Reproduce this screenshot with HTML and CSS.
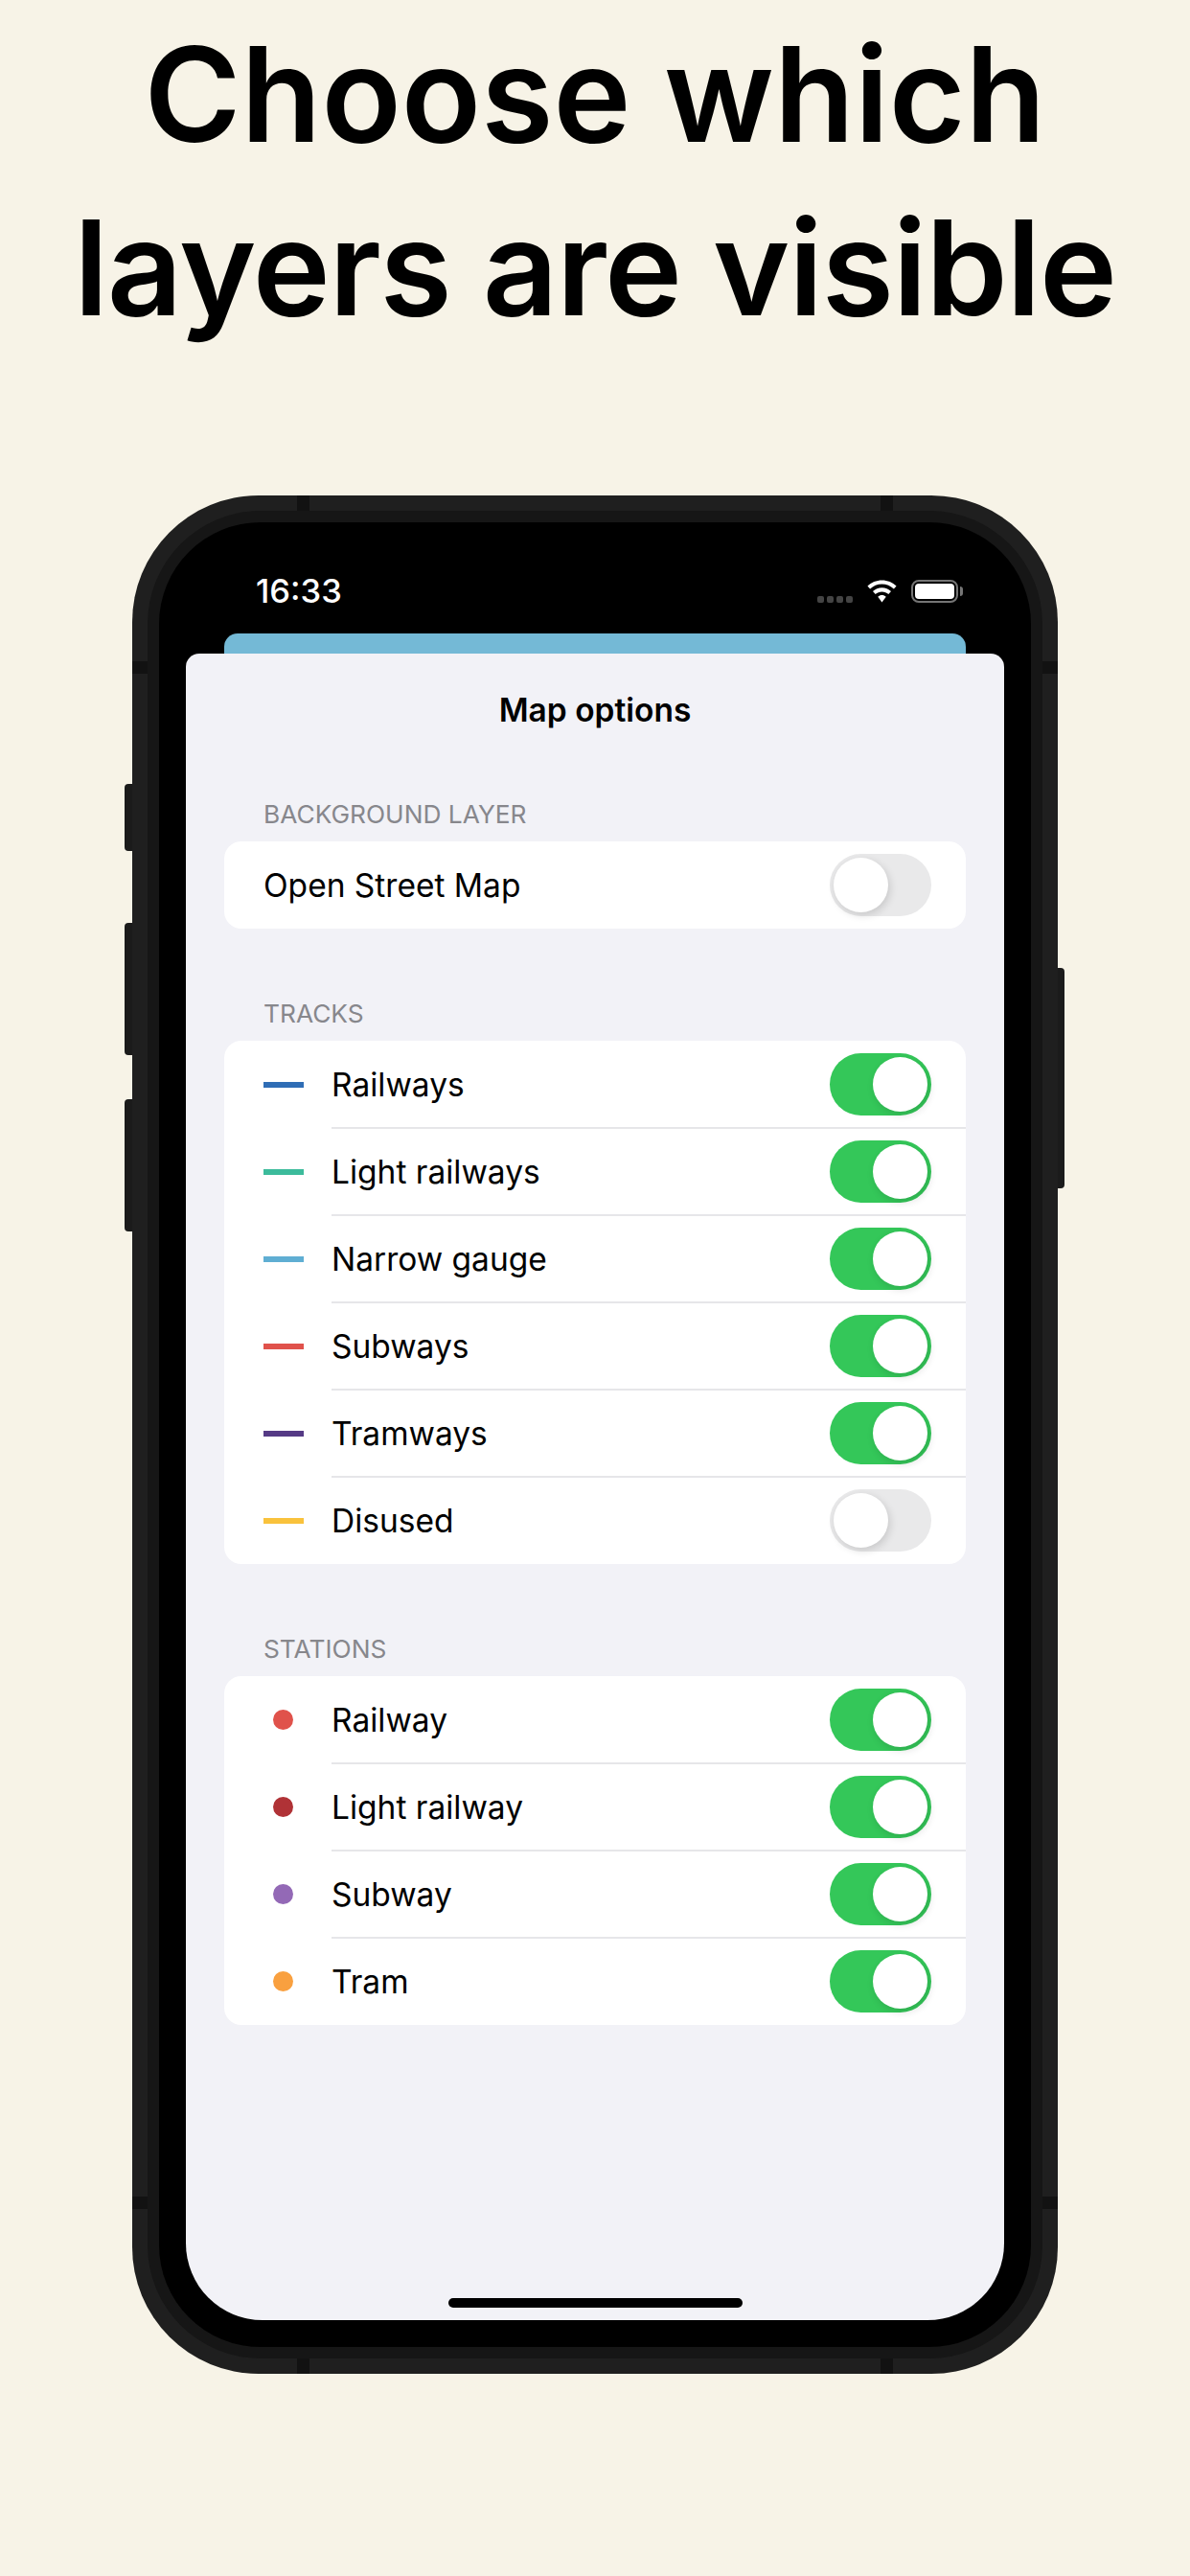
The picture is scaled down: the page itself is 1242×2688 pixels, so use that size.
FILE: index.html
```html
<!DOCTYPE html>
<html lang="en">
<head>
    <meta charset="UTF-8">
    <meta name="viewport" content="width=device-width, initial-scale=1.0">
    <title>Map options</title>
    <link rel="stylesheet" href="styles.css">
</head>
<body>

    <h1 class="headline">
        <span class="headline-one">Choose which</span>
        <span class="headline-two">layers are visible</span>
    </h1>

    <div class="phone">
        <span class="side-btn btn-mute"></span>
        <span class="side-btn btn-up"></span>
        <span class="side-btn btn-down"></span>
        <span class="side-btn btn-power"></span>

        <span class="band band-top-l"></span>
        <span class="band band-top-r"></span>
        <span class="band band-bot-l"></span>
        <span class="band band-bot-r"></span>
        <span class="band band-left-t"></span>
        <span class="band band-left-b"></span>
        <span class="band band-right-t"></span>
        <span class="band band-right-b"></span>

        <div class="phone-inner">
            <div class="screen">
                <div class="status-bar">
                    <span class="time">16:33</span>
                    <div class="status-icons">
                        <span class="signal"><i></i><i></i><i></i><i></i></span>
                        <svg class="wifi" width="33" height="24" viewBox="0 0 33 25">
                            <path d="M16.5 0.5C10.4 0.5 4.9 2.9 0.8 6.8L3.6 9.9C7 6.7 11.5 4.7 16.5 4.7S26 6.7 29.4 9.9L32.2 6.8C28.1 2.9 22.6 0.5 16.5 0.5Z" fill="#fff"/>
                            <path d="M16.5 8.6C12.7 8.6 9.2 10.1 6.6 12.6L9.4 15.7C11.3 14 13.8 12.9 16.5 12.9S21.7 14 23.6 15.7L26.4 12.6C23.8 10.1 20.3 8.6 16.5 8.6Z" fill="#fff"/>
                            <path d="M16.5 16.7C14.8 16.7 13.3 17.3 12.1 18.4L16.5 24.4L20.9 18.4C19.7 17.3 18.2 16.7 16.5 16.7Z" fill="#fff"/>
                        </svg>
                        <span class="battery"><span class="battery-fill"></span></span>
                    </div>
                </div>

                <div class="map-card"></div>

                <div class="sheet">
                    <h2 class="sheet-title">Map options</h2>

                    <div class="section-label">BACKGROUND LAYER</div>
                    <div class="group">
                        <div class="row">
                            <span class="row-text">Open Street Map</span>
                            <span class="toggle"></span>
                        </div>
                    </div>

                    <div class="section-label">TRACKS</div>
                    <div class="group">
                        <div class="row">
                            <span class="line line-railway"></span>
                            <span class="row-text">Railways</span>
                            <span class="toggle on"></span>
                        </div>
                        <div class="row">
                            <span class="line line-light"></span>
                            <span class="row-text">Light railways</span>
                            <span class="toggle on"></span>
                        </div>
                        <div class="row">
                            <span class="line line-narrow"></span>
                            <span class="row-text">Narrow gauge</span>
                            <span class="toggle on"></span>
                        </div>
                        <div class="row">
                            <span class="line line-subway"></span>
                            <span class="row-text">Subways</span>
                            <span class="toggle on"></span>
                        </div>
                        <div class="row">
                            <span class="line line-tram"></span>
                            <span class="row-text">Tramways</span>
                            <span class="toggle on"></span>
                        </div>
                        <div class="row">
                            <span class="line line-disused"></span>
                            <span class="row-text">Disused</span>
                            <span class="toggle"></span>
                        </div>
                    </div>

                    <div class="section-label">STATIONS</div>
                    <div class="group">
                        <div class="row">
                            <span class="dot dot-railway"></span>
                            <span class="row-text">Railway</span>
                            <span class="toggle on"></span>
                        </div>
                        <div class="row">
                            <span class="dot dot-light"></span>
                            <span class="row-text">Light railway</span>
                            <span class="toggle on"></span>
                        </div>
                        <div class="row">
                            <span class="dot dot-subway"></span>
                            <span class="row-text">Subway</span>
                            <span class="toggle on"></span>
                        </div>
                        <div class="row">
                            <span class="dot dot-tram"></span>
                            <span class="row-text">Tram</span>
                            <span class="toggle on"></span>
                        </div>
                    </div>

                    <span class="home-bar"></span>
                </div>
            </div>
        </div>
    </div>

</body>
</html>
```

FILE: styles.css
```css
html, body {
    margin: 0;
    padding: 0;
}
body {
    width: 1242px;
    height: 2688px;
    overflow: hidden;
    background-color: #F7F3E7;
    font-family: Inter, 'Liberation Sans', sans-serif;
    color: #000;
}

.headline {
    margin: 0;
    height: 517px;
    padding-top: 8px;
    box-sizing: border-box;
    font-size: 137px;
    font-weight: 600;
    line-height: 181px;
    text-align: center;
}
.headline-one {
    display: block;
    letter-spacing: 0;
}
.headline-two {
    display: block;
    letter-spacing: -1.3px;
}

/* phone frame */
.phone {
    position: relative;
    box-sizing: border-box;
    width: 966px;
    height: 1960px;
    margin-left: 138px;
    padding: 16px;
    border-radius: 132px;
    background-color: #1F1F1F;
}
.phone-inner {
    box-sizing: border-box;
    height: 100%;
    padding: 12px;
    border-radius: 118px;
    background-color: #161616;
}
.screen {
    box-sizing: border-box;
    height: 100%;
    padding: 0 28px 28px;
    border-radius: 106px;
    background-color: #000;
    display: flex;
    flex-direction: column;
}

.side-btn {
    position: absolute;
    background-color: #1B1B1B;
}
.btn-mute, .btn-up, .btn-down {
    left: -8px;
    width: 8px;
    border-radius: 4px 0 0 4px;
}
.btn-mute { top: 301px; height: 70px; }
.btn-up { top: 446px; height: 138px; }
.btn-down { top: 630px; height: 138px; }
.btn-power {
    right: -7px;
    top: 493px;
    width: 7px;
    height: 230px;
    border-radius: 0 4px 4px 0;
}

.band {
    position: absolute;
    background-color: #121212;
}
.band-top-l, .band-top-r, .band-bot-l, .band-bot-r {
    width: 13px;
    height: 16px;
}
.band-top-l { top: 0; left: 172px; }
.band-top-r { top: 0; right: 172px; }
.band-bot-l { bottom: 0; left: 172px; }
.band-bot-r { bottom: 0; right: 172px; }
.band-left-t, .band-left-b, .band-right-t, .band-right-b {
    width: 16px;
    height: 13px;
}
.band-left-t { left: 0; top: 173px; }
.band-left-b { left: 0; bottom: 172px; }
.band-right-t { right: 0; top: 173px; }
.band-right-b { right: 0; bottom: 172px; }

/* status bar */
.status-bar {
    flex: 0 0 116px;
    box-sizing: border-box;
    padding: 0 48px 0 73px;
    display: flex;
    align-items: flex-end;
    justify-content: space-between;
}
.time {
    color: #fff;
    font-size: 34.5px;
    font-weight: 500;
    line-height: 40px;
    margin-bottom: 24px;
}
.status-icons {
    display: flex;
    align-items: flex-end;
    margin-bottom: 32px;
}
.signal {
    display: flex;
    gap: 3px;
    margin: 0 14px 0 0;
}
.signal i {
    width: 7px;
    height: 7px;
    border-radius: 2px;
    background-color: #444;
}
.battery {
    position: relative;
    box-sizing: border-box;
    width: 49px;
    height: 24px;
    margin-left: 14px;
    padding: 2px;
    border: 2px solid #757575;
    border-radius: 8px;
    display: flex;
}
.battery::after {
    content: "";
    position: absolute;
    right: -7px;
    top: 5px;
    width: 3px;
    height: 10px;
    border-radius: 0 3px 3px 0;
    background-color: #757575;
}
.battery-fill {
    flex: 1;
    border-radius: 4px;
    background-color: #fff;
}

.map-card {
    flex: 0 0 21px;
    margin: 0 40px;
    border-radius: 14px 14px 0 0;
    background-color: #74B9D6;
}

/* options sheet */
.sheet {
    position: relative;
    flex: 1;
    padding: 0 40px;
    border-radius: 14px 14px 80px 80px;
    background-color: #F2F2F7;
}
.sheet-title {
    margin: 0;
    padding-top: 39px;
    font-size: 33.5px;
    font-weight: 600;
    line-height: 40px;
    text-align: center;
}
.section-label {
    margin-top: 73px;
    padding-left: 41px;
    box-sizing: border-box;
    color: #87878C;
    font-size: 26.3px;
    line-height: 32px;
    height: 44px;
}
.group {
    border-radius: 18px;
    background-color: #fff;
    overflow: hidden;
}
.row {
    position: relative;
    box-sizing: border-box;
    height: 91px;
    padding: 0 36px 0 41px;
    display: flex;
    align-items: center;
}
.row + .row::before {
    content: "";
    position: absolute;
    left: 112px;
    right: 0;
    top: -1px;
    height: 2px;
    background-color: #E6E6E9;
}
.row-text {
    flex: 1;
    font-size: 33.5px;
    line-height: 40px;
}

.line {
    width: 42px;
    height: 6px;
    margin-right: 29px;
}
.line-railway { background-color: #2F6DB5; }
.line-light { background-color: #3CBB9B; }
.line-narrow { background-color: #5FAED3; }
.line-subway { background-color: #E0524B; }
.line-tram { background-color: #553A85; }
.line-disused { background-color: #F9C23C; }

.dot {
    width: 21px;
    height: 21px;
    margin: 0 40px 0 10px;
    border-radius: 50%;
}
.dot-railway { background-color: #E0524B; }
.dot-light { background-color: #B03236; }
.dot-subway { background-color: #9369B6; }
.dot-tram { background-color: #F9A03F; }

.toggle {
    position: relative;
    width: 106px;
    height: 65px;
    border-radius: 33px;
    background-color: #E9E9EA;
}
.toggle::after {
    content: "";
    position: absolute;
    left: 4px;
    top: 4px;
    width: 57px;
    height: 57px;
    border-radius: 50%;
    background-color: #fff;
    box-shadow: 2px 3px 8px rgba(0, 0, 0, 0.14);
}
.toggle.on {
    background-color: #34C759;
}
.toggle.on::after {
    left: 45px;
}

.home-bar {
    position: absolute;
    left: 274px;
    bottom: 13px;
    width: 307px;
    height: 10px;
    border-radius: 5px;
    background-color: #000;
}
```
